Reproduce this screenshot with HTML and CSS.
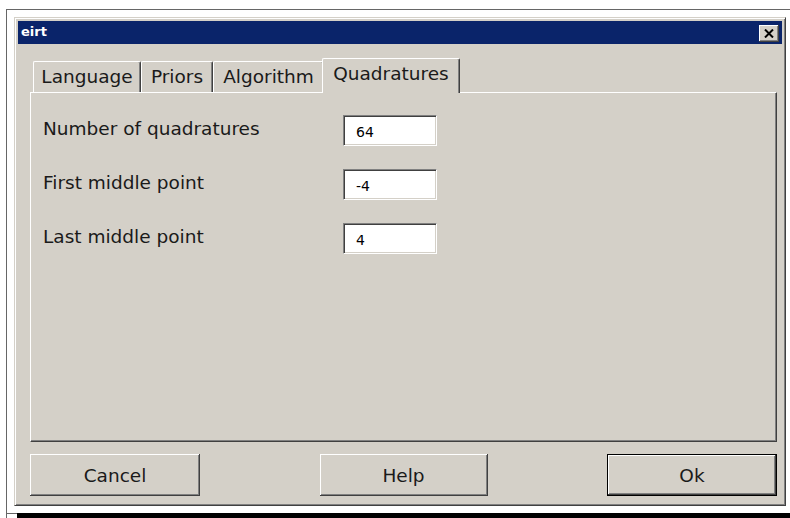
FILE: index.html
```html
<!DOCTYPE html>
<html lang="en">
<head>
<meta charset="utf-8">
<title>eirt</title>
<link rel="stylesheet" href="styles.css">
</head>
<body>
<div class="frame">
  <div class="dialog">
    <div class="titlebar">
      <span class="title">eirt</span>
      <button class="close" type="button" aria-label="Close">
        <svg width="10" height="9" viewBox="0 0 10 9"><path d="M1 0.5 L9 8.5 M9 0.5 L1 8.5" stroke="#000" stroke-width="2" fill="none"/></svg>
      </button>
    </div>
    <div class="body">
      <div class="tabs">
        <div class="tab tab-language">Language</div>
        <div class="tab tab-priors">Priors</div>
        <div class="tab tab-algorithm">Algorithm</div>
        <div class="tab tab-quad active">Quadratures</div>
      </div>
      <div class="panel">
        <div class="field">
          <span class="label">Number of quadratures</span>
          <span class="input">64</span>
        </div>
        <div class="field">
          <span class="label">First middle point</span>
          <span class="input">-4</span>
        </div>
        <div class="field">
          <span class="label">Last middle point</span>
          <span class="input">4</span>
        </div>
      </div>
      <div class="actions">
        <button class="btn" type="button">Cancel</button>
        <button class="btn btn-help" type="button">Help</button>
        <button class="btn btn-default" type="button">Ok</button>
      </div>
    </div>
  </div>
  <div class="base"><span class="stub"></span><span class="bar"></span></div>
</div>
</body>
</html>
```
FILE: styles.css
```css
* { box-sizing: border-box; }

html, body {
  margin: 0;
  padding: 0;
  background: #fff;
  width: 790px;
  height: 518px;
  overflow: hidden;
  font-family: "DejaVu Sans", "Liberation Sans", sans-serif;
}

/* desktop frame around the window */
.frame {
  margin: 9px 0 0 6px;
  border-top: 1px solid #666;
  border-left: 1px solid #666;
  padding: 7px 0 0 7px;
}

.dialog {
  width: 772px;
  height: 489px;
  background: #d4d0c8;
  border: 1px solid;
  border-color: #d4d0c8 #404040 #404040 #d4d0c8;
  box-shadow: inset 1px 1px #fff, inset -1px -1px #808080;
  padding: 3px;
  display: flex;
  flex-direction: column;
}

.titlebar {
  height: 23px;
  background: #0a246a;
  display: flex;
  align-items: flex-start;
  justify-content: space-between;
  padding: 0 3px 0 3px;
}

.title {
  color: #fff;
  font-weight: bold;
  font-size: 13px;
  line-height: 21px;
}

.close {
  margin-top: 4px;
  width: 20px;
  height: 17px;
  padding: 0;
  border: 0;
  background: #d4d0c8;
  box-shadow: inset -1px -1px #404040, inset 1px 1px #fff, inset -2px -2px #808080;
  display: flex;
  align-items: center;
  justify-content: center;
}

.body {
  flex: 1;
  display: flex;
  flex-direction: column;
  padding: 14px 5px 0 12px;
}

/* tab strip */
.tabs {
  display: flex;
  align-items: flex-end;
  height: 34px;
  padding-left: 3px;
}

.tab {
  height: 31px;
  font-size: 18.5px;
  color: #1a1a1a;
  line-height: 29px;
  text-align: center;
  background: #d4d0c8;
  border-top: 1px solid #fff;
  border-left: 1px solid #fff;
  border-right: 1px solid #404040;
  border-top-left-radius: 2px;
  border-top-right-radius: 2px;
  box-shadow: inset -1px 0 #808080;
}

.tab-language { width: 108px; }
.tab-priors { width: 72px; }
.tab-algorithm { width: 111px; }

.tab-quad {
  width: 138px;
  margin-left: -2px;
  height: 35px;
  line-height: 30px;
  margin-bottom: -1px;
  position: relative;
  z-index: 1;
}

.panel {
  height: 350px;
  border: 1px solid;
  border-color: #fff #404040 #404040 #fff;
  box-shadow: inset -1px -1px #808080;
  padding: 22px 12px 0 12px;
  display: flex;
  flex-direction: column;
  gap: 23px;
}

.field {
  display: flex;
  align-items: center;
  height: 31px;
}

.label {
  width: 300px;
  font-size: 18.5px;
  color: #1a1a1a;
  margin-top: -4px;
}

.input {
  width: 94px;
  height: 31px;
  background: #fff;
  border: 1px solid;
  border-color: #808080 #fff #fff #808080;
  box-shadow: inset 1px 1px #404040, inset -1px -1px #d4d0c8;
  font-size: 14px;
  line-height: 33px;
  padding-left: 12px;
  color: #000;
}

/* dialog buttons */
.actions {
  margin-top: 12px;
  display: flex;
  justify-content: space-between;
}

.btn {
  width: 170px;
  height: 42px;
  padding: 0;
  margin: 0;
  border: 0;
  background: #d4d0c8;
  font-family: "DejaVu Sans", "Liberation Sans", sans-serif;
  font-size: 18.5px;
  color: #1a1a1a;
  box-shadow: inset -1px -1px #404040, inset 1px 1px #fff, inset -2px -2px #808080;
}

.btn-help { width: 168px; }

.btn-default {
  border: 1px solid #000;
}

.base {
  display: flex;
  margin: 7px 0 0 -7px;
  height: 5px;
}

.stub {
  width: 10px;
  border-top: 1px solid #666;
}

.bar {
  flex: 1;
  background: #000;
}
```
